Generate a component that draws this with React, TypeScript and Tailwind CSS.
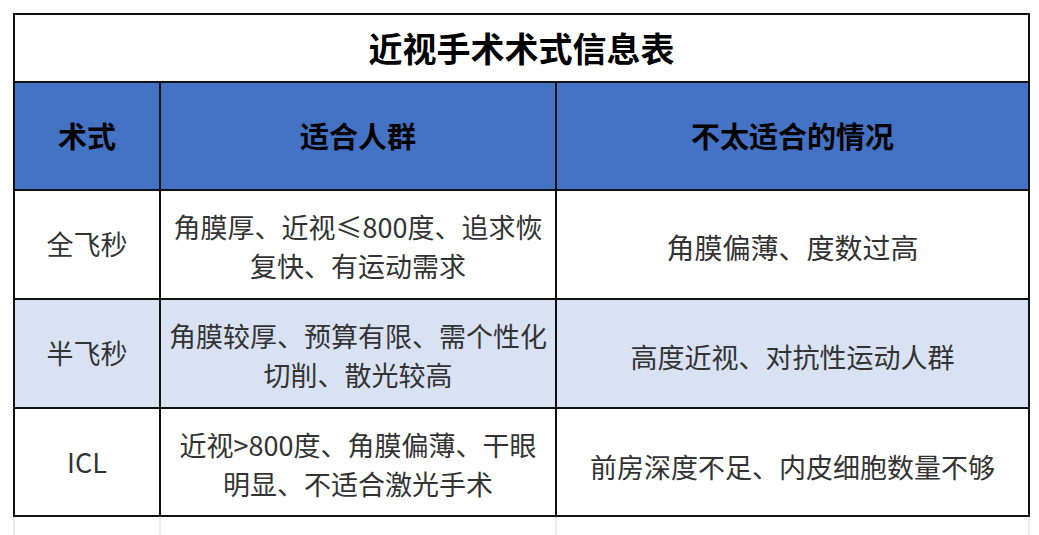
import React from "react";

const font = { fontFamily: '"Noto Sans CJK SC", "Noto Sans", sans-serif' };

const rows: { a: string; b: string[]; c: React.ReactNode; bg: string; cpt: string }[] = [
  {
    a: "全飞秒",
    b: ["角膜厚、近视≤800度、追求恢", "复快、有运动需求"],
    c: <span className="text-[28px]">角膜偏薄、度数过高</span>,
    bg: "bg-white",
    cpt: "pt-[4px]",
  },
  {
    a: "半飞秒",
    b: ["角膜较厚、预算有限、需个性化", "切削、散光较高"],
    c: <span>高度近视、对抗性运动人群</span>,
    bg: "bg-[#d9e2f3]",
    cpt: "pt-[8px]",
  },
  {
    a: "ICL",
    b: ["近视>800度、角膜偏薄、干眼", "明显、不适合激光手术"],
    c: <span>前房深度不足、内皮细胞数量不够</span>,
    bg: "bg-white",
    cpt: "pt-[10px]",
  },
];

export default function App() {
  return (
    <div className="w-[1039px] h-[535px] bg-white overflow-hidden pt-[13px] pl-[13px]" style={font}>
      <div className="grid grid-cols-[144px_394px_471px] grid-rows-[66px_106px_107px_107px_106px] gap-[2px] p-[2px] bg-[#111] w-[1017px]">
        <div className="col-span-3 bg-white flex items-center justify-center text-[34px] font-bold text-black leading-none pb-[1px]">
          近视手术术式信息表
        </div>
        <div className="bg-[#4472c4] flex items-center justify-center text-[29px] font-bold text-black">术式</div>
        <div className="bg-[#4472c4] flex items-center justify-center text-[29px] font-bold text-black">适合人群</div>
        <div className="bg-[#4472c4] flex items-center justify-center text-[29px] font-bold text-black">不太适合的情况</div>
        {rows.map((r, i) => (
          <React.Fragment key={i}>
            <div className={`${r.bg} flex items-center justify-center text-[27px] text-[#333]`}>{r.a}</div>
            <div className={`${r.bg} flex flex-col items-center justify-center text-[27px] leading-[39px] text-[#333] whitespace-nowrap pt-[3px]`}>
              {r.b.map((l, j) => (
                <div key={j}>{l}</div>
              ))}
            </div>
            <div className={`${r.bg} flex items-center justify-center text-[27px] text-[#333] whitespace-nowrap ${r.cpt}`}>{r.c}</div>
          </React.Fragment>
        ))}
      </div>
      <div className="grid grid-cols-[144px_394px_471px] gap-x-[2px] px-[2px] bg-[#ebebeb] w-[1017px] h-[20px]">
        <div className="bg-white" />
        <div className="bg-white" />
        <div className="bg-white" />
      </div>
    </div>
  );
}
